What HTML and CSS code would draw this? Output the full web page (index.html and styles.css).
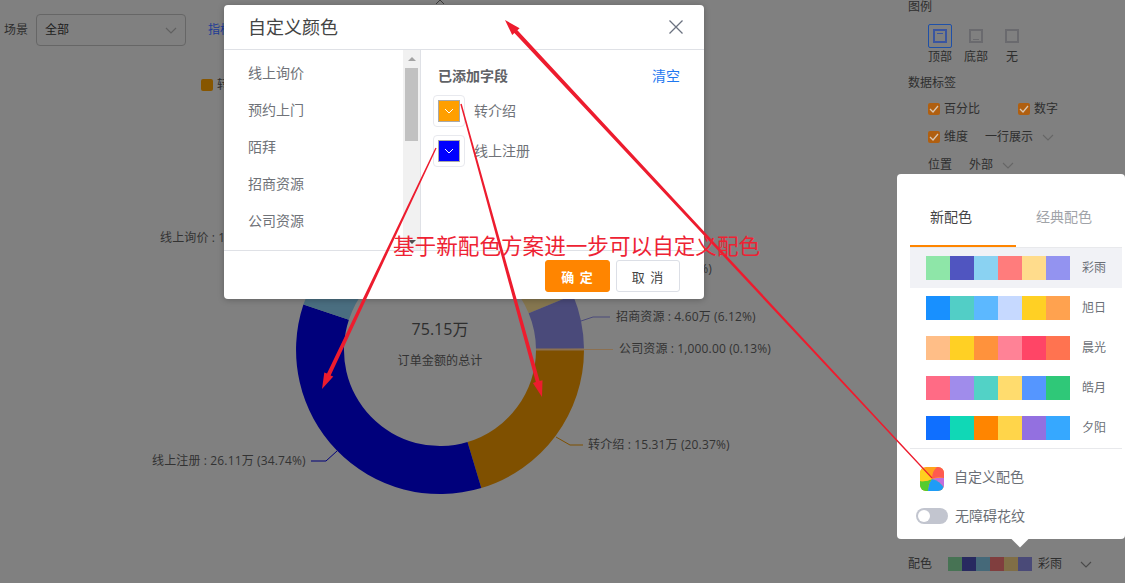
FILE: index.html
```html
<!DOCTYPE html>
<html lang="zh-CN">
<head>
<meta charset="utf-8">
<title>自定义颜色</title>
<link rel="stylesheet" href="styles.css">
</head>
<body>
<div class="page">
  <main class="main">
    <svg class="top-chevron" width="10" height="4" viewBox="0 0 10 4"><path d="M1 4 L5 0 L9 4" fill="none" stroke="#3c3c3c"/></svg>
    <div class="toolbar">
      <span class="tb-label">场景</span>
      <div class="select"><span>全部</span><svg class="chev" width="12" height="7" viewBox="0 0 12 7"><path d="M1 1 L6 6 L11 1" fill="none" stroke="#606060" stroke-width="1.2"/></svg></div>
      <span class="tb-link">指标</span>
    </div>
    <div class="legend"><i class="legend-dot"></i><span>转介绍</span></div>
    <svg class="chart" viewBox="0 100 900 483" width="900" height="483">
      <path d="M584 350A144 144 0 0 1 481.3 488L467.5 442A96 96 0 0 0 536 350Z" fill="#7f5000"/>
      <path d="M481.3 488A144 144 0 0 1 303.4 304.6L348.9 319.7A96 96 0 0 0 467.5 442Z" fill="#00007b"/>
      <path d="M303.4 304.6A144 144 0 0 1 368 225.3L392 266.9A96 96 0 0 0 348.9 319.7Z" fill="#4a6e80"/>
      <path d="M512 225.3A144 144 0 0 1 573 294.9L528.7 313.3A96 96 0 0 0 488 266.9Z" fill="#85764f"/>
      <path d="M573 294.9A144 144 0 0 1 584 348.8L536 349.2A96 96 0 0 0 528.7 313.3Z" fill="#4a4a7a"/>
      <path d="M584 348.6L584 350.4L536 350.4L536 348.6Z" fill="#8c7050"/>
      <path class="lead" d="M337 451L326 461H311" stroke="#00007b"/>
      <path class="lead" d="M556 437L570 445H583" stroke="#7f5000"/>
      <path class="lead" d="M581 321L593 317H610" stroke="#4a4a7a"/>
      <path class="lead" d="M583 349.5H613" stroke="#8c7050"/>
      <text class="lbl" x="160" y="242">线上询价 : 10.20万 (13.57%)</text>
      <text class="lbl" x="712" y="273" text-anchor="end">预约上门 : 1.00万 (1.33%)</text>
      <text class="lbl" x="152" y="465">线上注册 : 26.11万 (34.74%)</text>
      <text class="lbl" x="588" y="449">转介绍 : 15.31万 (20.37%)</text>
      <text class="lbl" x="616" y="321">招商资源 : 4.60万 (6.12%)</text>
      <text class="lbl" x="619" y="353">公司资源 : 1,000.00 (0.13%)</text>
      <text class="center-num" x="440" y="335" text-anchor="middle">75.15万</text>
      <text class="lbl" x="440" y="365" text-anchor="middle">订单金额的总计</text>
    </svg>
  </main>

  <aside class="side">
    <div class="s-title">图例</div>
    <div class="pos-row">
      <div class="pos"><span class="pos-box active"><i class="pos-ico top"></i></span><span>顶部</span></div>
      <div class="pos"><span class="pos-box"><i class="pos-ico bottom"></i></span><span>底部</span></div>
      <div class="pos"><span class="pos-box"><i class="pos-ico"></i></span><span>无</span></div>
    </div>
    <div class="s-title mt12">数据标签</div>
    <div class="s-row first">
      <label class="chk w90"><i class="box"><svg width="10" height="8" viewBox="0 0 10 8"><path d="M1 4 L4 7 L9 1" fill="none" stroke="#d9c7b4" stroke-width="1.3"/></svg></i>百分比</label>
      <label class="chk"><i class="box"><svg width="10" height="8" viewBox="0 0 10 8"><path d="M1 4 L4 7 L9 1" fill="none" stroke="#d9c7b4" stroke-width="1.3"/></svg></i>数字</label>
    </div>
    <div class="s-row">
      <label class="chk w57"><i class="box"><svg width="10" height="8" viewBox="0 0 10 8"><path d="M1 4 L4 7 L9 1" fill="none" stroke="#d9c7b4" stroke-width="1.3"/></svg></i>维度</label>
      <span>一行展示</span><svg class="s-chev" width="12" height="7" viewBox="0 0 12 7"><path d="M1 1 L6 6 L11 1" fill="none" stroke="#666" stroke-width="1.1"/></svg>
    </div>
    <div class="s-row">
      <span class="w41">位置</span><span>外部</span><svg class="s-chev" width="12" height="7" viewBox="0 0 12 7"><path d="M1 1 L6 6 L11 1" fill="none" stroke="#666" stroke-width="1.1"/></svg>
    </div>
    <div class="color-row">
      <span class="w40">配色</span>
      <div class="mini">
        <i class="m1"></i><i class="m2"></i><i class="m3"></i><i class="m4"></i><i class="m5"></i><i class="m6"></i>
      </div>
      <span class="mini-name">彩雨</span>
      <svg class="mini-chev" width="12" height="7" viewBox="0 0 12 7"><path d="M1 1 L6 6 L11 1" fill="none" stroke="#4a4a4a" stroke-width="1.1"/></svg>
    </div>
  </aside>

  <div class="popover">
    <div class="tabs"><div class="tab active">新配色</div><div class="tab">经典配色</div></div>
    <div class="scheme current"><div class="sw"><i style="background:#8ee6a8"></i><i style="background:#5055c0"></i><i style="background:#8ad2f2"></i><i style="background:#ff7c7c"></i><i style="background:#ffdc8c"></i><i style="background:#9393f0"></i></div><span>彩雨</span></div>
    <div class="scheme"><div class="sw"><i style="background:#1890ff"></i><i style="background:#52cec6"></i><i style="background:#5cb8ff"></i><i style="background:#c6d9ff"></i><i style="background:#ffd024"></i><i style="background:#ffa24f"></i></div><span>旭日</span></div>
    <div class="scheme"><div class="sw"><i style="background:#ffbe87"></i><i style="background:#ffd024"></i><i style="background:#ff923c"></i><i style="background:#ff8296"></i><i style="background:#ff4566"></i><i style="background:#ff7350"></i></div><span>晨光</span></div>
    <div class="scheme"><div class="sw"><i style="background:#ff6b85"></i><i style="background:#a08ceb"></i><i style="background:#52d2c6"></i><i style="background:#ffdc6e"></i><i style="background:#5596ff"></i><i style="background:#2fc878"></i></div><span>皓月</span></div>
    <div class="scheme"><div class="sw"><i style="background:#0f6fff"></i><i style="background:#10d8b6"></i><i style="background:#ff8500"></i><i style="background:#ffd54a"></i><i style="background:#9370e0"></i><i style="background:#36a8ff"></i></div><span>夕阳</span></div>
    <div class="custom">
      <svg class="wheel" width="24" height="24" viewBox="0 0 24 24">
        <rect width="24" height="24" fill="#ffa31a"/>
        <path d="M12 12Q12 4 17 0H24V11Q17 9 12 12Z" fill="#ff5a4f"/>
        <path d="M12 12Q19 10 24 11V21Q20 14 12 12Z" fill="#c46ddc"/>
        <path d="M12 12Q20 14 24 21V24H8Q8 17 12 12Z" fill="#1e9cf7"/>
        <path d="M12 12Q8 17 8 24H0V14Q6 15 12 12Z" fill="#55cc2e"/>
        <path d="M12 12Q6 15 0 14V0H3Q8 5 12 12Z" fill="#ffcf1f"/>
      </svg>
      <span>自定义配色</span>
    </div>
    <div class="a11y"><i class="toggle"></i><span>无障碍花纹</span></div>
    <i class="caret"></i>
  </div>

  <section class="modal">
    <header class="m-head">
      <span>自定义颜色</span>
      <svg width="16" height="16" viewBox="0 0 16 16"><path d="M1.5 1.5 L14.5 14.5 M14.5 1.5 L1.5 14.5" stroke="#6b7280" stroke-width="1.3" fill="none"/></svg>
    </header>
    <div class="m-body">
      <div class="m-left">
        <ul class="list">
          <li>线上询价</li><li>预约上门</li><li>陌拜</li><li>招商资源</li><li>公司资源</li>
        </ul>
        <div class="scrollbar">
          <i class="up"></i>
          <i class="thumb"></i>
          <i class="down"></i>
        </div>
      </div>
      <div class="m-right">
        <div class="added"><b>已添加字段</b><a>清空</a></div>
        <div class="field">
          <span class="picker"><i class="orange"><svg width="10" height="6" viewBox="0 0 10 6"><path d="M1 1 L5 5 L9 1" fill="none" stroke="#fff" stroke-width="1"/></svg></i></span>
          <span>转介绍</span>
        </div>
        <div class="field">
          <span class="picker"><i class="blue"><svg width="10" height="6" viewBox="0 0 10 6"><path d="M1 1 L5 5 L9 1" fill="none" stroke="#fff" stroke-width="1"/></svg></i></span>
          <span>线上注册</span>
        </div>
      </div>
    </div>
    <footer class="m-foot">
      <button class="btn primary">确 定</button>
      <button class="btn">取 消</button>
    </footer>
  </section>

  <svg class="arrows" width="1125" height="583" viewBox="0 0 1125 583">
    <polygon points="932.4,477.6 517.4,30.3 519.6,28.3 505,20 512.2,35.1 514.4,33.1 931.6,478.4"/>
    <polygon points="436.6,148.3 330.6,375.4 333.3,376.6 322,389 324.3,372.4 327,373.6 435.4,147.7"/>
    <polygon points="461.7,103.8 539.6,381.1 542.5,380.3 542,397 532.9,382.9 535.8,382.1 460.3,104.2"/>
  </svg>
  <div class="note">基于新配色方案进一步可以自定义配色</div>
</div>
</body>
</html>
```
FILE: styles.css
```css
* { box-sizing: border-box; }
html, body { margin: 0; padding: 0; }
body { font-family: "Open Sans", "Noto Sans CJK SC", sans-serif; }
i { display: block; }
.page {
  position: relative;
  width: 1125px;
  height: 583px;
  overflow: hidden;
  display: flex;
  background: #808080;
  color: #2e2e2e;
  font-size: 12px;
  line-height: 14px;
}
.main { position: relative; width: 900px; flex: none; }
.top-chevron { position: absolute; left: 435px; top: 0; }
.toolbar { display: flex; align-items: center; height: 32px; margin-top: 14px; padding-left: 4px; }
.tb-label { width: 32px; }
.select {
  display: flex; align-items: center; justify-content: space-between;
  width: 150px; height: 32px;
  padding: 0 8px 0 8px;
  border: 1px solid #666;
  border-radius: 4px;
  font-size: 12px;
  color: #1c1c1c;
}
.tb-link { margin-left: 22px; color: #1d3c96; }
.legend { display: flex; align-items: center; gap: 4px; margin: 33px 0 0 201px; height: 12px; }
.legend-dot { width: 12px; height: 12px; border-radius: 2px; background: #875600; }
.chart { display: block; margin-top: 9px; }
.lead { fill: none; stroke-width: 1; }
.lbl { font-size: 12px; fill: #333; letter-spacing: .14px; }
.center-num { font-size: 16px; fill: #2e2e2e; }

.side {
  flex: 1;
  display: flex;
  flex-direction: column;
  padding: 0 0 12px 8px;
}
.s-title { height: 14px; }
.mt12 { margin-top: 12px; }
.pos-row { display: flex; gap: 12px; margin: 10px 0 0 20px; }
.pos { display: flex; flex-direction: column; align-items: center; width: 24px; gap: 2px; }
.pos-box { display: flex; align-items: center; justify-content: center; width: 24px; height: 24px; border: 1px solid transparent; border-radius: 2px; }
.pos-box.active { border-color: #1e50a8; }
.pos-ico { position: relative; width: 14px; height: 14px; border: 2px solid #6a6a6e; }
.active .pos-ico { border-color: #3a55a0; }
.pos-ico.top::after, .pos-ico.bottom::after {
  content: ""; position: absolute; left: 2px; right: 2px; height: 1px; background: #3a55a0;
}
.pos-ico.top::after { top: 2px; }
.pos-ico.bottom::after { bottom: 1px; background: #6a6a6e; }
.s-row { display: flex; align-items: center; height: 14px; margin: 14px 0 0 20px; }
.s-row.first { margin-top: 12px; }
.chk { display: flex; align-items: center; gap: 4px; }
.w90 { width: 90px; }
.w57 { width: 57px; }
.w41 { width: 41px; }
.w40 { width: 40px; flex: none; }
.box { display: flex; align-items: center; justify-content: center; width: 12px; height: 12px; border-radius: 2px; background: #b05f10; }
.s-chev { margin-left: 9px; }
.color-row { display: flex; align-items: center; margin-top: auto; height: 14px; }
.mini { display: flex; }
.mini i { width: 14px; height: 14px; }
.m1 { background: #477354; }
.m2 { background: #282a60; }
.m3 { background: #456979; }
.m4 { background: #803e3e; }
.m5 { background: #806e46; }
.m6 { background: #4a4a78; }
.mini-name { margin-left: 6px; }
.mini-chev { margin-left: 18px; }

.popover {
  position: absolute;
  left: 897px; top: 174px; right: 0; height: 365px;
  padding-left: 13px;
  background: #fff;
  border-radius: 4px;
  color: #6b6f76;
}
.tabs { display: flex; width: 212px; height: 74px; border-bottom: 1px solid #e8e9ec; font-size: 14px; color: #a0a3a8; }
.tab { width: 106px; height: 73px; padding: 36px 0 0 20px; }
.tab.active { color: #444; border-bottom: 2px solid #ff8500; }
.scheme { display: flex; align-items: center; width: 212px; height: 40px; padding-left: 16px; gap: 12px; }
.scheme.current { background: #f1f2f6; }
.sw { display: flex; }
.sw i { width: 24px; height: 24px; }
.custom { display: flex; align-items: center; gap: 10px; height: 43px; width: 212px; padding: 18px 0 0 10px; border-top: 1px solid #e8e9ec; font-size: 14px; }
.custom span { margin-top: -4px; }
.wheel { flex: none; border-radius: 6px; }
.a11y { display: flex; align-items: center; gap: 7px; height: 16px; margin: 17px 0 0 6px; font-size: 14px; }
.toggle { position: relative; width: 32px; height: 16px; border-radius: 8px; background: #c2c5cf; }
.toggle::after { content: ""; position: absolute; left: 2px; top: 2px; width: 12px; height: 12px; border-radius: 50%; background: #fff; }
.caret { position: absolute; left: 117px; bottom: -6px; width: 12px; height: 12px; background: #fff; transform: rotate(45deg); }

.modal {
  position: absolute;
  left: 224px; top: 5px;
  width: 480px; height: 294px;
  display: flex; flex-direction: column;
  background: #fff;
  border-radius: 4px;
  box-shadow: 0 1px 6px rgba(0,0,0,.25);
  color: #6f7278;
  font-size: 14px;
}
.m-head {
  display: flex; align-items: center; justify-content: space-between;
  height: 45px; flex: none;
  padding: 0 20px 0 24px;
  border-bottom: 1px solid #dfe1e6;
  font-size: 18px; color: #444;
}
.m-body { display: flex; height: 200px; flex: none; }
.m-left { display: flex; width: 197px; border-right: 1px solid #dfe1e6; }
.list { flex: 1; margin: 0; padding: 4px 0 0 24px; list-style: none; overflow: hidden; }
.list li { height: 37px; line-height: 37px; }
.scrollbar { position: relative; width: 17px; flex: none; background: #f1f1f1; }
.thumb { position: absolute; left: 2px; right: 2px; top: 18px; height: 73px; background: #c1c1c1; }
.up, .down { position: absolute; left: 5px; width: 0; height: 0; border-left: 4px solid transparent; border-right: 4px solid transparent; }
.up { top: 7px; border-bottom: 4px solid #a3a3a3; }
.down { bottom: 6px; border-top: 4px solid #505050; }
.m-right { flex: 1; padding: 0 24px 0 12px; }
.added { display: flex; align-items: center; justify-content: space-between; height: 20px; margin: 16px 0 9px 5px; }
.added b { font-weight: 600; color: #606266; font-size: 14px; }
.added a { color: #1f78f0; }
.field { display: flex; align-items: center; gap: 9px; height: 32px; margin-bottom: 8px; }
.picker { display: flex; align-items: center; justify-content: center; width: 32px; height: 32px; border: 1px solid #e8e9ee; border-radius: 4px; }
.picker i { display: flex; align-items: center; justify-content: center; width: 22px; height: 22px; border: 1px solid #a9a9a9; }
.orange { background: #ff9f00; }
.blue { background: #0000ff; }
.m-foot { display: flex; justify-content: flex-end; align-items: flex-start; gap: 6px; flex: 1; padding: 9px 24px 0 0; border-top: 1px solid #dfe1e6; }
.btn { width: 64px; height: 32px; padding: 0; border: 1px solid #dcdfe6; border-radius: 3px; background: #fff; color: #444; font: 13px "Open Sans", "Noto Sans CJK SC", sans-serif; letter-spacing: 1px; }
.btn.primary { width: 65px; border-color: #ff8500; background: #ff8500; color: #fff; font-weight: 700; }

.arrows { position: absolute; left: 0; top: 0; pointer-events: none; }
.arrows polygon { fill: #ed1c2e; }
.note {
  position: absolute; left: 393px; top: 232px;
  font-size: 21.6px; line-height: 28px; color: #ee2233; white-space: nowrap;
}
```
